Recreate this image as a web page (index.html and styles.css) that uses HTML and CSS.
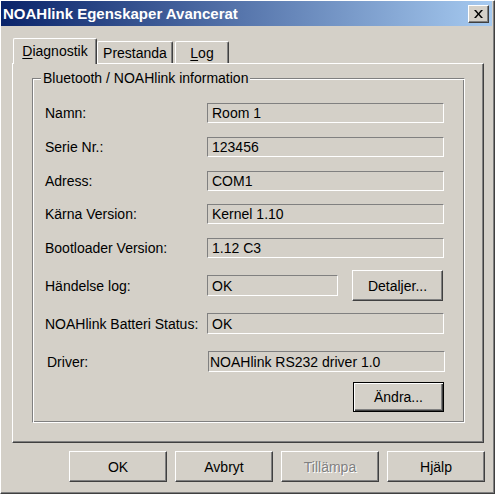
FILE: index.html
```html
<!DOCTYPE html>
<html lang="sv">
<head>
    <meta charset="UTF-8">
    <title>NOAHlink Egenskaper Avancerat</title>
    <link rel="stylesheet" href="styles.css">
</head>
<body>
    <div class="window">
        <div class="titlebar">
            <span class="title">NOAHlink Egenskaper Avancerat</span>
            <button class="close" aria-label="Stäng">
                <svg width="9" height="8" viewBox="0 0 9 8">
                    <path d="M0 0h2l2.5 3 2.5-3h2L5.5 4 9 8H7L4.5 5 2 8H0l3.5-4z" fill="#000"/>
                </svg>
            </button>
        </div>

        <div class="client">
            <div class="tabs">
                <div class="tab active"><u>D</u>iagnostik</div>
                <div class="tab">Prestanda</div>
                <div class="tab tab-log"><u>L</u>og</div>
            </div>

            <div class="panel">
                <fieldset class="group">
                    <legend>Bluetooth / NOAHlink information</legend>

                    <div class="row first">
                        <span class="label">Namn:</span>
                        <div class="field">Room 1</div>
                    </div>
                    <div class="row">
                        <span class="label">Serie Nr.:</span>
                        <div class="field">123456</div>
                    </div>
                    <div class="row">
                        <span class="label">Adress:</span>
                        <div class="field">COM1</div>
                    </div>
                    <div class="row tight">
                        <span class="label">Kärna Version:</span>
                        <div class="field">Kernel 1.10</div>
                    </div>
                    <div class="row">
                        <span class="label">Bootloader Version:</span>
                        <div class="field">1.12 C3</div>
                    </div>
                    <div class="row with-button">
                        <span class="label">Händelse log:</span>
                        <div class="field short">OK</div>
                        <button class="btn">Detaljer...</button>
                    </div>
                    <div class="row tall">
                        <span class="label">NOAHlink Batteri Status:</span>
                        <div class="field">OK</div>
                    </div>
                    <div class="row tall driver">
                        <span class="label">Driver:</span>
                        <div class="field flat">NOAHlink RS232 driver 1.0</div>
                    </div>
                    <div class="row end">
                        <button class="btn default">Ändra...</button>
                    </div>
                </fieldset>
            </div>

            <div class="actions">
                <button class="btn">OK</button>
                <button class="btn">Avbryt</button>
                <button class="btn" disabled>Tillämpa</button>
                <button class="btn">Hjälp</button>
            </div>
        </div>
    </div>
</body>
</html>
```

FILE: styles.css
```css
/* Classic dialog look */
* {
    margin: 0;
    padding: 0;
    box-sizing: border-box;
}

body {
    font-family: "Liberation Sans", Arial, sans-serif;
    font-size: 14px;
    color: #000;
    background-color: #d4d0c8;
}

.window {
    width: 495px;
    height: 494px;
    display: flex;
    flex-direction: column;
    background-color: #d4d0c8;
    border-top: 1px solid #fff;
    border-left: 1px solid #fff;
    border-right: 1px solid #404040;
    border-bottom: 1px solid #404040;
    box-shadow: inset -1px -1px #808080;
}

/* Title bar */
.titlebar {
    height: 25px;
    margin-right: 2px;
    display: flex;
    align-items: center;
    justify-content: space-between;
    padding: 0 3px 0 2px;
    background: linear-gradient(to right, #0a246a, #a6caf0);
}

.title {
    color: #fff;
    font-weight: bold;
    font-size: 15px;
}

.close {
    width: 21px;
    height: 18px;
    display: flex;
    align-items: center;
    justify-content: center;
    background-color: #d4d0c8;
    border: 1px solid;
    border-color: #fff #404040 #404040 #fff;
    box-shadow: inset -1px -1px #808080;
}

/* Client area */
.client {
    flex: 1;
    display: flex;
    flex-direction: column;
    padding: 12px 10px 0 11px;
}

.tabs {
    display: flex;
    align-items: flex-end;
    height: 25px;
    padding-left: 1px;
}

.tab {
    height: 22px;
    display: flex;
    align-items: center;
    justify-content: center;
    border-top: 1px solid #fff;
    border-left: 1px solid #fff;
    border-right: 1px solid #404040;
    border-top-left-radius: 2px;
    border-top-right-radius: 2px;
    box-shadow: inset -1px 0 #808080;
    width: 76px;
}

.tab.active {
    width: 84px;
    height: 26px;
    margin-bottom: -1px;
    padding-bottom: 2px;
    position: relative;
    z-index: 1;
    background-color: #d4d0c8;
}

.tab-log {
    width: 54px;
    margin-left: 2px;
}

.tab u {
    text-decoration-thickness: 1px;
    text-underline-offset: 2px;
}

.panel {
    height: 380px;
    display: flex;
    padding: 7px 18px 19px 19px;
    border: 1px solid;
    border-color: #fff #404040 #404040 #fff;
    box-shadow: inset -1px -1px #808080;
}

/* Group box */
.group {
    flex: 1;
    padding: 18px 20px 0 12px;
    border: 1px solid;
    border-color: #808080 #fff #fff #808080;
    box-shadow: inset 1px 1px #fff, inset -1px -1px #808080;
}

.group legend {
    margin-left: -4px;
    padding: 0 2px;
    line-height: 14px;
    background-color: #d4d0c8;
}

.row {
    display: flex;
    align-items: center;
    height: 20px;
    margin-top: 14px;
}

.row.first {
    margin-top: 0;
}

.row.tight {
    margin-top: 13px;
}

.row.with-button {
    height: 31px;
    margin-top: 12px;
}

.row.tall {
    height: 21px;
    margin-top: 12px;
}

.row.driver {
    margin-top: 17px;
}

.row.end {
    height: 30px;
    margin-top: 10px;
    justify-content: flex-end;
}

.label {
    width: 162px;
    white-space: nowrap;
}

.driver .label {
    padding-left: 2px;
}

.field {
    flex: 1;
    height: 100%;
    display: flex;
    align-items: center;
    padding-left: 4px;
    border: 1px solid;
    border-color: #808080 #fff #fff #808080;
}

.field.short {
    flex: none;
    width: 131px;
    height: 21px;
    margin-right: 14px;
}

.field.flat {
    padding-left: 1px;
    margin-left: 1px;
    margin-right: -1px;
}

/* Buttons */
.btn {
    width: 91px;
    height: 31px;
    font: inherit;
    color: #000;
    background-color: #d4d0c8;
    border: 1px solid;
    border-color: #fff #404040 #404040 #fff;
    box-shadow: inset -1px -1px #808080;
}

.btn.default {
    height: 30px;
    border-color: #000;
    box-shadow: inset 1px 1px #fff, inset -1px -1px #404040, inset -2px -2px #808080;
}

.btn:disabled {
    color: #808080;
    text-shadow: 1px 1px #fff;
}

.actions {
    display: flex;
    justify-content: flex-end;
    gap: 8px;
    padding-top: 8px;
    margin-right: -1px;
}

.actions .btn {
    width: 98px;
    height: 31px;
}
```
